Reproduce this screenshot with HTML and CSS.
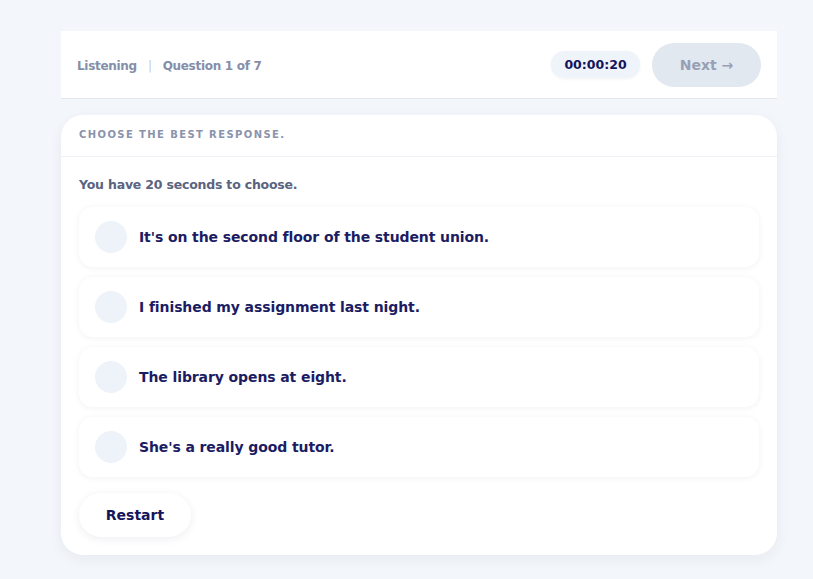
FILE: index.html
```html
<!DOCTYPE html>
<html lang="en">
<head>
<meta charset="utf-8">
<title>Listening</title>
<link rel="stylesheet" href="styles.css">
</head>
<body>
<div class="page">
  <header class="topbar">
    <div class="crumbs">
      <span>Listening</span>
      <span class="sep">|</span>
      <span>Question 1 of 7</span>
    </div>
    <div class="actions">
      <span class="timer">00:00:20</span>
      <button class="next">Next →</button>
    </div>
  </header>
  <section class="card">
    <div class="card-head">CHOOSE THE BEST RESPONSE.</div>
    <div class="card-body">
      <p class="hint">You have 20 seconds to choose.</p>
      <div class="options">
        <div class="option"><span class="radio"></span><span class="label">It's on the second floor of the student union.</span></div>
        <div class="option"><span class="radio"></span><span class="label">I finished my assignment last night.</span></div>
        <div class="option"><span class="radio"></span><span class="label">The library opens at eight.</span></div>
        <div class="option"><span class="radio"></span><span class="label">She's a really good tutor.</span></div>
      </div>
      <button class="restart">Restart</button>
    </div>
  </section>
</div>
</body>
</html>
```
FILE: styles.css
```css
* { box-sizing: border-box; }
html, body { margin: 0; padding: 0; }
body {
  background: #f3f6fa;
  font-family: "DejaVu Sans", "Noto Sans", sans-serif;
  font-weight: 700;
  width: 813px;
  height: 579px;
  overflow: hidden;
}
.page {
  margin-left: 61px;
  width: 716px;
  padding-top: 31px;
  display: flex;
  flex-direction: column;
  gap: 16px;
}
.topbar {
  height: 68px;
  background: #fff;
  border-bottom: 1px solid #e3e8ef;
  display: flex;
  align-items: center;
  justify-content: space-between;
  padding: 2px 16px 0 16px;
}
.crumbs {
  display: flex;
  align-items: center;
  gap: 11px;
  font-size: 12px;
  color: #858ea8;
  letter-spacing: -0.3px;
}
.crumbs .sep { color: #c6ccd8; font-weight: 400; }
.actions { display: flex; align-items: center; gap: 12px; margin-top: -2px; }
.timer {
  background: #eff3fa;
  border-radius: 14px;
  height: 27px;
  width: 89px;
  display: flex;
  align-items: center;
  justify-content: center;
  font-size: 12.5px;
  color: #14145a;
  box-shadow: 0 1px 3px rgba(30,40,80,0.06);
}
.next {
  width: 109px;
  height: 44px;
  border: none;
  border-radius: 22px;
  background: #e2e8f0;
  color: #97a0b4;
  font-family: inherit;
  font-weight: 700;
  font-size: 14px;
}
.card {
  background: #fff;
  border-radius: 22px;
  height: 440px;
  box-shadow: 0 4px 14px rgba(40,60,110,0.06);
  overflow: hidden;
}
.card-head {
  height: 42px;
  border-bottom: 1px solid #edf0f5;
  padding: 14px 18px 0;
  font-size: 10px;
  letter-spacing: 1.4px;
  color: #8a93ac;
}
.card-body { padding: 20px 18px 0; }
.hint {
  margin: 0 0 15px;
  font-size: 12.5px;
  color: #5a6380;
  letter-spacing: -0.2px;
}
.options { display: flex; flex-direction: column; gap: 10px; }
.option {
  height: 60px;
  border-radius: 14px;
  background: #fff;
  box-shadow: 0 1px 6px rgba(30,40,80,0.06);
  display: flex;
  align-items: center;
  padding-left: 16px;
  gap: 12px;
}
.radio {
  width: 32px;
  height: 32px;
  border-radius: 50%;
  background: #eef2f9;
  flex: none;
}
.label {
  font-size: 14px;
  color: #1b1c62;
  letter-spacing: -0.1px;
}
.restart {
  margin-top: 16px;
  width: 112px;
  height: 44px;
  border: none;
  border-radius: 22px;
  background: #fff;
  box-shadow: 0 2px 8px rgba(30,40,80,0.08);
  font-family: inherit;
  font-weight: 700;
  font-size: 14px;
  color: #14145a;
}
```
